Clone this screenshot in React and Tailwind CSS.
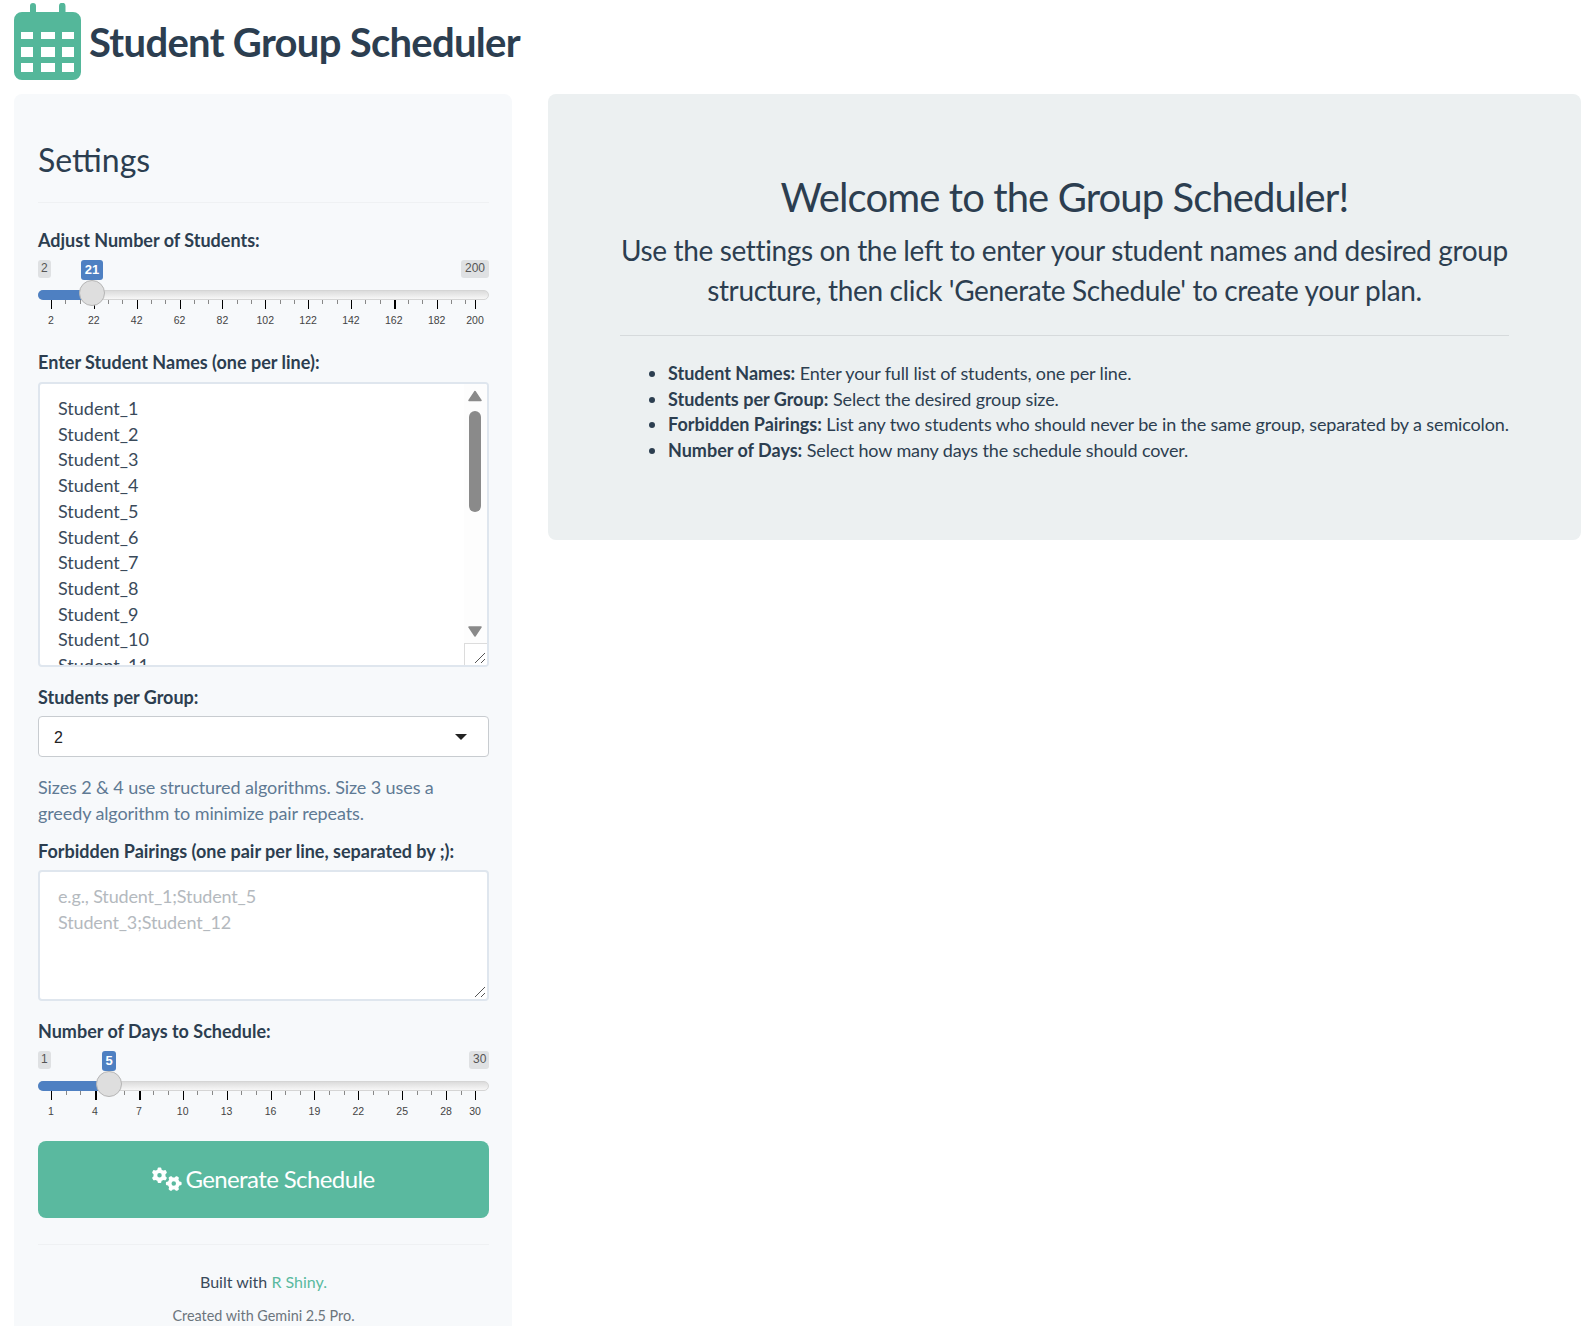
import React from "react";
import { FaGears } from "react-icons/fa6";

const FONT = "font-['Lato','Noto_Sans',sans-serif]";

function CalendarIcon() {
  return (
    <svg width="68" height="78" viewBox="0 0 68 78" className="shrink-0">
      <path fill="#54b79a" fillRule="evenodd" d="M16 3a3 3 0 0 1 6 0v6h23V3a3 3 0 0 1 6.5 0v6H59a8 8 0 0 1 8 8v52a8 8 0 0 1-8 8H8a8 8 0 0 1-8-8V17a8 8 0 0 1 8-8h8zM7 29v7h12V29zM27 29v7h14V29zM48 29v7h12V29zM7 44v10h12V44zM27 44v10h14V44zM48 44v10h12V44zM7 60v9h12V60zM27 60v9h14V60zM48 60v9h12V60z" />
    </svg>
  );
}

function Slider({ min, max, value, fillEnd, handleX, tipW, maxW, ticks, minors }) {
  return (
    <div className="relative h-[64px] w-full font-['Liberation_Sans',Arial,sans-serif]">
      <div className="absolute left-0 top-0 h-[18px] rounded-[3px] bg-[#dfe1e3] px-[3px] text-[12px] leading-[17px] text-[#555]">{min}</div>
      <div className="absolute right-0 top-0 h-[18px] rounded-[3px] bg-[#dfe1e3] px-[4px] text-[12px] leading-[17px] text-[#555]" style={{ width: maxW }}>{max}</div>
      <div className="absolute top-[30px] h-[10px] w-full rounded-full border border-[#d5d5d5] bg-gradient-to-b from-[#dcdcdc] to-[#f7f7f7]" />
      <div className="absolute left-0 top-[30px] h-[10px] rounded-l-full bg-[#4e80c2]" style={{ width: fillEnd }} />
      {minors.map((x) => (
        <div key={x} className="absolute top-[40px] h-[4px] w-px bg-[#888]" style={{ left: x }} />
      ))}
      {ticks.map(([label, x, bold]) => (
        <React.Fragment key={label}>
          <div className={"absolute top-[40px] h-[9px] bg-black " + (bold ? "w-[2px]" : "w-px")} style={{ left: x }} />
          <div className="absolute top-[53px] w-[40px] -translate-x-1/2 text-center text-[10.5px] leading-[14px] text-[#444]" style={{ left: x }}>{label}</div>
        </React.Fragment>
      ))}
      <div className="absolute top-0 h-[20px] -translate-x-1/2 rounded-[3px] bg-[#4e80c2] text-center text-[13px] font-bold leading-[20px] text-white" style={{ left: handleX, width: tipW }}>{value}</div>
      <div className="absolute top-[20px] h-[26px] w-[26px] -translate-x-1/2 rounded-full border border-[#b5b5b5] bg-[#dedede]" style={{ left: handleX }} />
    </div>
  );
}

function Label({ children, className = "" }) {
  return <div className={"text-[18px] font-bold leading-[26px] text-[#2c3e50] " + className}>{children}</div>;
}

function Grip() {
  return (
    <svg width="12" height="12" viewBox="0 0 12 12" className="absolute bottom-[1px] right-[1px]">
      <path d="M1 11L11 1M7 11l4-4" stroke="#555" strokeWidth="1" />
    </svg>
  );
}

const students = ["Student_1","Student_2","Student_3","Student_4","Student_5","Student_6","Student_7","Student_8","Student_9","Student_10","Student_11"];
const range = (a, n, d) => Array.from({ length: n }, (_, i) => a + i * d);

const D1 = 42.85;
const D2 = 43.9;
const t1 = [2,22,42,62,82,102,122,142,162,182].map((l, i) => [String(l), 13 + i * D1, l === 162]).concat([["200", 437]]);
const m1 = range(13, 30, D1 / 3).filter((x, i) => x < 436 && i % 3 !== 0);
const t2 = [1,4,7,10,13,16,19,22,25,28].map((l, i) => [String(l), 13 + i * D2, l === 4 || l === 7]).concat([["30", 437]]);
const m2 = range(13, 30, D2 / 3).filter((x, i) => x < 436 && i % 3 !== 0);

export default function App() {
  return (
    <div className={"h-[1326px] w-full overflow-hidden bg-white pl-[14px] pr-[15px] text-[#2c3e50] " + FONT}>
      <header className="flex h-[94px] items-start pt-[3px]">
        <CalendarIcon />
        <h1 className="ml-[7px] mt-[15px] text-[40px] font-bold leading-[48px] tracking-[-0.7px] text-[#2c3e50]">Student Group Scheduler</h1>
      </header>
      <div className="flex items-start gap-[36px]">
        <aside className="h-[1300px] w-[498px] shrink-0 rounded-t-lg bg-[#f7f9fb] pl-[24px] pr-[23px] pt-[48px]">
          <h2 className="text-[32px] font-normal leading-[36px] text-[#2c3e50]">Settings</h2>
          <hr className="mb-[24px] mt-[24px] border-0 border-t border-[#eff1f3]" />
          <Label>Adjust Number of Students:</Label>
          <div className="mt-[7px]">
            <Slider min="2" max="200" value="21" fillEnd={50} handleX={54} tipW={22} maxW={28} ticks={t1} minors={m1} />
          </div>
          <Label className="mt-[25px]">Enter Student Names (one per line):</Label>
          <div className="relative mt-[7px] h-[285px] overflow-hidden rounded-[4px] border-2 border-[#dfe6ee] bg-white pl-[18px] pt-[12px] text-[18px] leading-[25.7px] text-[#3a4a5a]">
            {students.map((s) => <div key={s}>{s}</div>)}
            <div className="absolute right-0 top-0 h-full w-[23px] bg-[#fdfdfd]">
              <svg width="14" height="254" viewBox="0 0 14 254" className="absolute left-[4px] top-[6px]">
                <path d="M7 1.5l6 9H1z" fill="#8a8a8a" stroke="#8a8a8a" strokeWidth="1.5" strokeLinejoin="round" />
                <rect x="1" y="21" width="12" height="101" rx="6" fill="#8a8a8a" />
                <path d="M1 237h12l-6 9z" fill="#8a8a8a" stroke="#8a8a8a" strokeWidth="1.5" strokeLinejoin="round" />
              </svg>
              <div className="absolute bottom-0 right-0 h-[22px] w-[23px] border-l border-t border-[#dcdcdc] bg-white">
                <Grip />
              </div>
            </div>
          </div>
          <Label className="mt-[17px]">Students per Group:</Label>
          <div className="mt-[6px] flex h-[41px] items-center justify-between rounded-[4px] border border-[#c8ccd0] bg-white pl-[15px] pr-[21px] font-['Liberation_Sans',Arial,sans-serif] text-[16px] text-[#222]">
            <span className="pt-[3px]">2</span>
            <svg width="12" height="6" viewBox="0 0 12 6"><path d="M0 0h12L6 6z" fill="#222" /></svg>
          </div>
          <p className="mt-[17px] text-[18px] leading-[26px] tracking-[-0.1px] text-[#5f7a94]">Sizes 2 &amp; 4 use structured algorithms. Size 3 uses a<br />greedy algorithm to minimize pair repeats.</p>
          <Label className="mt-[12px]">Forbidden Pairings (one pair per line, separated by ;):</Label>
          <div className="relative mt-[6px] h-[131px] rounded-[4px] border-2 border-[#dfe6ee] bg-white pl-[18px] pt-[11px] text-[18px] leading-[26px] tracking-[-0.15px] text-[#b4b9be]">
            <div>e.g., Student_1;Student_5</div>
            <div>Student_3;Student_12</div>
            <Grip />
          </div>
          <Label className="mt-[17px]">Number of Days to Schedule:</Label>
          <div className="mt-[7px]">
            <Slider min="1" max="30" value="5" fillEnd={60} handleX={71} tipW={14} maxW={20} ticks={t2} minors={m2} />
          </div>
          <button className="mt-[26px] flex h-[77px] w-full items-center justify-center gap-[3px] rounded-[8px] bg-[#5ab99f] pb-[2px] text-[24px] tracking-[-0.6px] text-white">
            <FaGears className="h-[24px] w-[30px]" />
            <span>Generate Schedule</span>
          </button>
          <hr className="mt-[26px] border-0 border-t border-[#eff1f3]" />
          <div className="mt-[26px] text-center text-[16px] leading-[22px] text-[#3a4a5a]">
            Built with <span className="text-[#5ab99f]">R Shiny.</span>
          </div>
          <div className="mt-[12px] text-center text-[14.4px] leading-[22px] text-[#6c757d]">Created with Gemini 2.5 Pro.</div>
        </aside>
        <main className="h-[446px] flex-1 rounded-lg bg-[#ecf0f1] px-[72px] pt-[79px]">
          <h3 className="text-center text-[40px] font-normal leading-[48px] tracking-[-0.9px] text-[#2c3e50]">Welcome to the Group Scheduler!</h3>
          <p className="mt-[9px] text-center text-[28px] leading-[40px] tracking-[-0.36px] text-[#2c3e50]">Use the settings on the left to enter your student names and desired group<br />structure, then click 'Generate Schedule' to create your plan.</p>
          <hr className="mt-[25px] border-0 border-t border-[#d6dadc]" />
          <ul className="mt-[25px] list-disc pl-[48px] text-[18px] leading-[25.7px] tracking-[-0.13px] text-[#2c3e50]">
            <li className="whitespace-nowrap"><b className="tracking-normal">Student Names:</b> Enter your full list of students, one per line.</li>
            <li className="whitespace-nowrap"><b className="tracking-normal">Students per Group:</b> Select the desired group size.</li>
            <li className="whitespace-nowrap"><b className="tracking-normal">Forbidden Pairings:</b> List any two students who should never be in the same group, separated by a semicolon.</li>
            <li className="whitespace-nowrap"><b className="tracking-normal">Number of Days:</b> Select how many days the schedule should cover.</li>
          </ul>
        </main>
      </div>
    </div>
  );
}
